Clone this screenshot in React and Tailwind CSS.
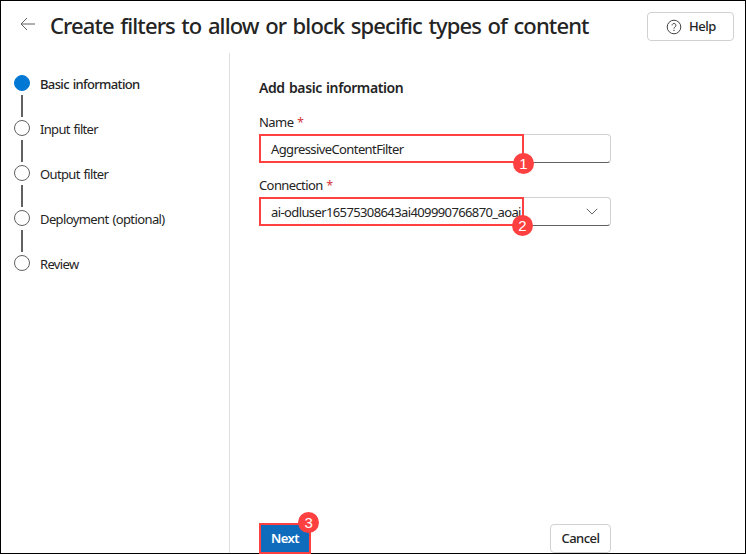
const steps = [
  { label: 'Basic information', track: 'tracking-[-0.65px]', current: true },
  { label: 'Input filter', track: 'tracking-[-0.68px]' },
  { label: 'Output filter', track: 'tracking-[-0.64px]' },
  { label: 'Deployment (optional)', track: 'tracking-[-0.6px]' },
  { label: 'Review', track: 'tracking-[-0.65px]' },
];

function Badge({ n, className }) {
  return (
    <span
      className={`absolute z-10 flex size-[21px] items-center justify-center rounded-full bg-[#ff4040] font-['Liberation_Sans',sans-serif] text-[15px] leading-none font-normal text-white ${className}`}
    >
      {n}
    </span>
  );
}

function Steps() {
  return (
    <ol className="flex flex-col pt-[22px] pl-[13px]">
      {steps.map((s, i) => (
        <li key={s.label} className="flex h-[45px] gap-[10px]">
          <div className="flex w-4 flex-col items-center">
            <span
              className={`size-4 shrink-0 rounded-full border ${s.current ? 'border-[#0078d4] bg-[#0078d4]' : 'border-[#616161]'}`}
            />
            {i < steps.length - 1 && <span className="mt-1 h-[22px] w-[2px] bg-[#616161]" />}
          </div>
          <span
            className={`text-[13px] leading-[18px] whitespace-nowrap [word-spacing:1px] ${s.current ? 'font-medium' : ''} ${s.track}`}
          >
            {s.label}
          </span>
        </li>
      ))}
    </ol>
  );
}

function Field({ label, value, n, chevron, labelTrack, valueTrack, badge }) {
  return (
    <div className="flex w-[352px] flex-col">
      <label className={`h-[21px] text-[13px] leading-[18px] [word-spacing:1px] ${labelTrack}`}>
        {label} <span className="text-[12px] text-[#d13438]">*</span>
      </label>
      <div className="relative flex h-[29px] items-center justify-between rounded-[4px] border border-[#d1d1d1] border-b-[#616161] pr-[12px] pl-[11px]">
        <span className={`text-[13px] leading-[18px] whitespace-nowrap ${valueTrack}`}>{value}</span>
        {chevron && (
          <svg width="12" height="7" viewBox="0 0 12 7" fill="none" stroke="#616161">
            <path d="M.8.8 6 6 11.2.8" />
          </svg>
        )}
        <span className="absolute -top-px -left-px h-[29px] w-[265px] border-2 border-[#ff4040]" />
        <Badge n={n} className={badge} />
      </div>
    </div>
  );
}

export default function App() {
  return (
    <div className="flex h-[554px] w-[746px] flex-col border border-black bg-white font-['Noto_Sans',sans-serif] text-[#242424]">
      <header className="flex h-[52px] shrink-0 items-start pr-[11px] pl-[19px]">
        <svg className="mt-[16px]" width="16" height="14" viewBox="0 0 16 14" fill="none" stroke="#616161">
          <path d="M7 1 1 7l6 6M1 7h14" />
        </svg>
        <h1 className="mt-[9px] ml-[14px] text-[22px] leading-[30px] font-medium tracking-[-0.88px] whitespace-nowrap [word-spacing:1.6px]">
          Create filters to allow or block specific types of content
        </h1>
        <button className="mt-[11px] ml-auto flex h-[29px] w-[87px] items-center rounded-[4px] border border-[#d1d1d1] pl-[18px] text-[13px] font-medium tracking-[-0.5px]">
          <svg width="16" height="16" viewBox="0 0 16 16" fill="none" stroke="#424242">
            <circle cx="8" cy="8" r="6.8" />
            <path d="M6.1 6.4a1.9 1.9 0 1 1 3 1.5C8.4 8.4 8 8.7 8 9.6" />
            <circle cx="8" cy="11.3" r=".3" />
          </svg>
          <span className="ml-[7px]">Help</span>
        </button>
      </header>
      <div className="flex min-h-0 flex-1">
        <nav className="w-[229px] shrink-0 border-r border-[#e0e0e0]">
          <Steps />
        </nav>
        <main className="flex flex-1 flex-col pl-[29px]">
          <h2 className="mt-[25px] h-[35px] text-[14px] leading-[20px] font-semibold tracking-[-0.4px] [word-spacing:1px]">
            Add basic information
          </h2>
          <Field
            label="Name"
            value="AggressiveContentFilter"
            n="1"
            labelTrack="tracking-[-0.55px]"
            valueTrack="tracking-[-0.6px]"
            badge="top-[18px] left-[253px]"
          />
          <div className="h-[13px]" />
          <Field
            label="Connection"
            value="ai-odluser16575308643ai409990766870_aoai"
            n="2"
            chevron
            labelTrack="tracking-[-0.6px]"
            valueTrack="tracking-[-0.61px]"
            badge="top-[17px] left-[252px]"
          />
          <footer className="mt-auto flex w-[352px] items-end justify-between">
            <button className="relative -mb-px flex h-[31px] w-[52px] items-center justify-center border-2 border-[#ff4040] bg-[#0f6cbd] text-[13px] font-semibold tracking-[-0.5px] text-white">
              Next
              <Badge n="3" className="-top-[13px] left-[37px]" />
            </button>
            <button className="flex h-[29px] w-[61px] items-center justify-center rounded-[4px] border border-[#d1d1d1] text-[13px] font-medium tracking-[-0.5px]">
              Cancel
            </button>
          </footer>
        </main>
      </div>
    </div>
  );
}
